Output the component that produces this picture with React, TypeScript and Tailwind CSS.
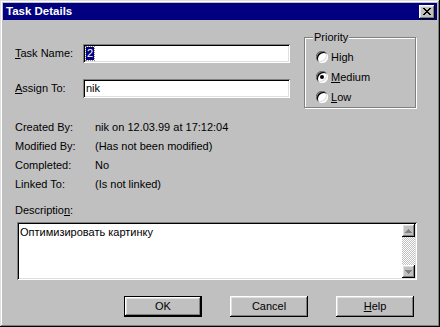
import React from 'react';

const raised =
  'shadow-[inset_-1px_-1px_#000,inset_1px_1px_#fff,inset_-2px_-2px_#808080,inset_2px_2px_#dfdfdf]';
const sunken =
  'shadow-[inset_1px_1px_#808080,inset_-1px_-1px_#fff,inset_2px_2px_#000,inset_-2px_-2px_#dfdfdf]';

function Radio({ children, checked }: { children: React.ReactNode; checked?: boolean }) {
  return (
    <div className="flex h-[20px] items-center">
      <div
        className={`flex h-[12px] w-[12px] items-center justify-center rounded-full bg-white ${sunken}`}
      >
        {checked && <div className="h-[4px] w-[4px] rounded-full bg-black" />}
      </div>
      <span className="ml-[3px]">{children}</span>
    </div>
  );
}

function InfoRow({ label, value }: { label: string; value: string }) {
  return (
    <div className="flex h-[19px] items-center">
      <span className="w-[80px]">{label}</span>
      <span>{value}</span>
    </div>
  );
}

function Button({ children, isDefault }: { children: React.ReactNode; isDefault?: boolean }) {
  return (
    <div className={`h-[21px] w-[78px] ${isDefault ? 'border border-black' : ''}`}>
      <div className={`flex h-full w-full items-center justify-center bg-[#c0c0c0] ${raised}`}>
        {children}
      </div>
    </div>
  );
}

export default function App() {
  return (
    <div
      className="h-[327px] w-[440px] bg-[#c0c0c0] px-[3px] pt-[3px] text-[11px] leading-[13px] text-black shadow-[inset_-1px_-1px_#000,inset_1px_1px_#dfdfdf,inset_-2px_-2px_#808080,inset_2px_2px_#fff]"
      style={{ fontFamily: '"Liberation Sans", Arial, sans-serif' }}
    >
      {/* Title bar */}
      <div className="flex h-[17px] items-center justify-between bg-[#000080] pl-[3px] pr-[2px]">
        <span className="text-[11.5px] font-bold text-white">Task Details</span>
        <div className={`flex h-[14px] w-[16px] items-center justify-center bg-[#c0c0c0] ${raised}`}>
          <svg width="8" height="7" viewBox="0 0 8 7" shapeRendering="crispEdges">
            <path
              d="M0 0h2v1h-2zM6 0h2v1h-2zM1 1h2v1h-2zM5 1h2v1h-2zM2 2h4v1h-4zM3 3h2v1h-2zM2 4h4v1h-4zM1 5h2v1h-2zM5 5h2v1h-2zM0 6h2v1h-2zM6 6h2v1h-2z"
              fill="#000"
            />
          </svg>
        </div>
      </div>

      <div className="pl-[12px]">
        {/* Top section */}
        <div className="mt-[10px] flex items-start">
          <div className="flex flex-col">
            <div className="mt-[14px] flex items-center">
              <span className="w-[68px]">
                <span className="underline">T</span>ask Name:
              </span>
              <div className={`flex h-[19px] w-[207px] items-center bg-white pl-[3px] ${sunken}`}>
                <span className="bg-[#000080] px-[1px] text-white outline-1 outline-dotted outline-[#808080]">2</span>
              </div>
            </div>
            <div className="mt-[16px] flex items-center">
              <span className="w-[68px]">
                <span className="underline">A</span>ssign To:
              </span>
              <div className={`flex h-[19px] w-[207px] items-center bg-white pl-[3px] ${sunken}`}>
                nik
              </div>
            </div>
          </div>

          <fieldset className="ml-[14px] h-[78px] w-[112px] border border-[#808080] pl-[11px] pt-[3px] shadow-[inset_1px_1px_#fff,1px_1px_#fff]">
            <legend className="ml-[-3px] bg-[#c0c0c0] px-[1px] leading-[14px]">Priority</legend>
            <Radio>High</Radio>
            <Radio checked>
              <span className="underline">M</span>edium
            </Radio>
            <Radio>
              <span className="underline">L</span>ow
            </Radio>
          </fieldset>
        </div>

        {/* Info */}
        <div className="mt-[10px]">
          <InfoRow label="Created By:" value="nik on 12.03.99 at 17:12:04" />
          <InfoRow label="Modified By:" value="(Has not been modified)" />
          <InfoRow label="Completed:" value="No" />
          <InfoRow label="Linked To:" value="(Is not linked)" />
        </div>

        <div className="mt-[9px] flex h-[14px] items-center">
          <span>
            Descriptio<span className="underline">n</span>:
          </span>
        </div>

        {/* Description box */}
        <div className={`ml-[2px] mt-[5px] flex h-[58px] w-[400px] bg-white p-[2px] ${sunken}`}>
          <div className="flex-1 pl-[1px] pt-[1px] leading-[14px]">Оптимизировать картинку</div>
          <div className="flex w-[13px] flex-col bg-[repeating-conic-gradient(#c0c0c0_0_25%,#fff_0_50%)] bg-[length:2px_2px]">
            <div className={`flex h-[13px] items-center justify-center bg-[#c0c0c0] ${raised}`}>
              <svg width="7" height="4" viewBox="0 0 7 4" shapeRendering="crispEdges">
                <path d="M3 0h1v1h1v1h1v1h1v1h-7v-1h1v-1h1v-1h1z" fill="#808080" />
              </svg>
            </div>
            <div className="flex-1" />
            <div className={`flex h-[13px] items-center justify-center bg-[#c0c0c0] ${raised}`}>
              <svg width="7" height="4" viewBox="0 0 7 4" shapeRendering="crispEdges">
                <path d="M0 0h7v1h-1v1h-1v1h-1v1h-1v-1h-1v-1h-1v-1h-1z" fill="#808080" />
              </svg>
            </div>
          </div>
        </div>

        {/* Buttons */}
        <div className="mt-[16px] flex gap-[28px] pl-[109px]">
          <Button isDefault>OK</Button>
          <Button>Cancel</Button>
          <Button>
            <span>
              <span className="underline">H</span>elp
            </span>
          </Button>
        </div>
      </div>
    </div>
  );
}
